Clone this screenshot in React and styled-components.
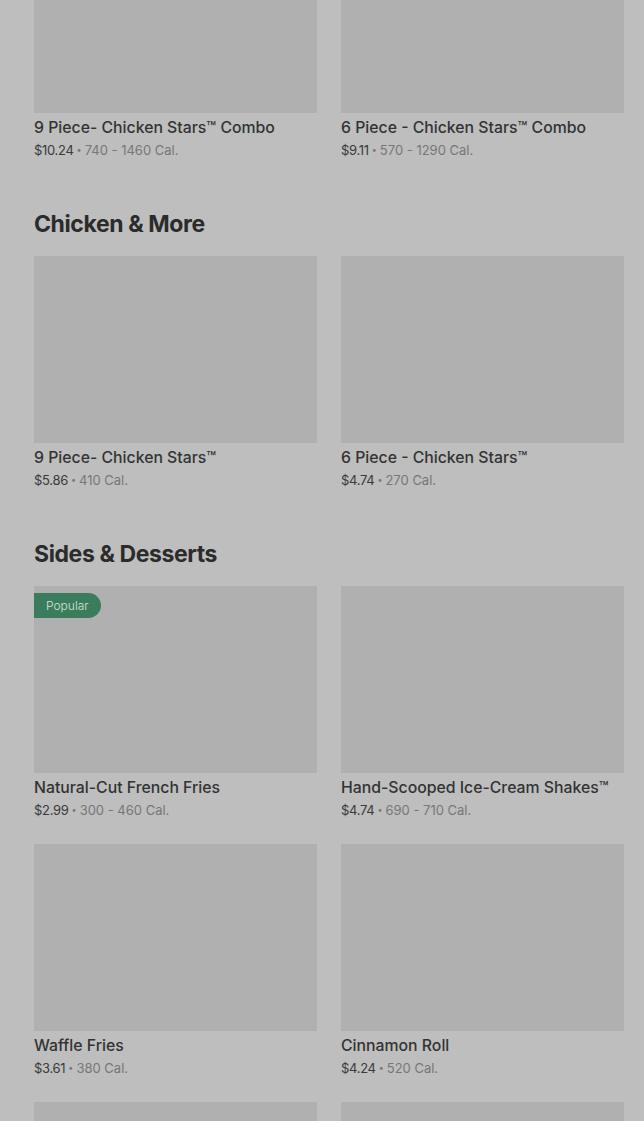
import React from "react";
import styled, { createGlobalStyle } from "styled-components";

const GlobalStyle = createGlobalStyle`
  html, body {
    margin: 0;
    padding: 0;
    background: #bebebe;
    font-family: Inter, "Noto Sans", "Liberation Sans", sans-serif;
    overflow: hidden;
  }
`;

const sections = [
  {
    title: null,
    items: [
      { name: "9 Piece- Chicken Stars™ Combo", price: "$10.24", cal: "740 - 1460 Cal." },
      { name: "6 Piece - Chicken Stars™ Combo", price: "$9.11", cal: "570 - 1290 Cal." },
    ],
  },
  {
    title: "Chicken & More",
    items: [
      { name: "9 Piece- Chicken Stars™", price: "$5.86", cal: "410 Cal." },
      { name: "6 Piece - Chicken Stars™", price: "$4.74", cal: "270 Cal." },
    ],
  },
  {
    title: "Sides & Desserts",
    items: [
      { name: "Natural-Cut French Fries", price: "$2.99", cal: "300 - 460 Cal.", popular: true },
      { name: "Hand-Scooped Ice-Cream Shakes™", price: "$4.74", cal: "690 - 710 Cal." },
      { name: "Waffle Fries", price: "$3.61", cal: "380 Cal." },
      { name: "Cinnamon Roll", price: "$4.24", cal: "520 Cal." },
      { name: "Chocolate Chunk Cookie", price: "$1.99", cal: "370 Cal." },
      { name: "Side Salad", price: "$2.49", cal: "150 Cal." },
    ],
  },
];

const App = () => (
  <>
    <GlobalStyle />
    <Page>
      {sections.map((section, i) => (
        <Section key={i}>
          {section.title && <SectionTitle>{section.title}</SectionTitle>}
          <Grid>
            {section.items.map((item, j) => (
              <Card key={j}>
                <ImageBox>
                  {item.popular && <Badge>Popular</Badge>}
                </ImageBox>
                <ItemName>{item.name}</ItemName>
                <PriceLine>
                  <Price>{item.price}</Price>
                  <Dot>•</Dot>
                  <Cal>{item.cal}</Cal>
                </PriceLine>
              </Card>
            ))}
          </Grid>
        </Section>
      ))}
    </Page>
  </>
);

const Page = styled.main`
  padding: 0 20px 0 34px;
  margin-top: -74px;
`;

const Section = styled.section`
  & + & {
    margin-top: 49px;
  }
`;

const SectionTitle = styled.h2`
  margin: 0 0 16px;
  font-size: 23px;
  line-height: 32px;
  font-weight: 700;
  letter-spacing: -0.4px;
  color: #2b2b2b;
`;

const Grid = styled.div`
  display: grid;
  grid-template-columns: 283px 283px;
  column-gap: 24px;
  row-gap: 25px;
`;

const Card = styled.div`
  display: flex;
  flex-direction: column;
`;

const ImageBox = styled.div`
  position: relative;
  height: 187px;
  background: #b0b0b0;
`;

const Badge = styled.span`
  position: absolute;
  top: 7px;
  left: 0;
  height: 25px;
  padding: 0 12px;
  display: flex;
  align-items: center;
  background: #3b7c5c;
  color: #d3e5da;
  font-size: 12px;
  font-weight: 300;
  border-radius: 0 13px 13px 0;
`;

const ItemName = styled.div`
  margin-top: 5px;
  font-size: 15.8px;
  line-height: 20px;
  font-weight: 500;
  color: #333333;
  white-space: nowrap;
`;

const PriceLine = styled.div`
  margin-top: 3px;
  display: flex;
  align-items: center;
  gap: 3px;
  font-size: 13px;
  line-height: 18px;
`;

const Price = styled.span`
  color: #3a3a3a;
  letter-spacing: -0.3px;
`;

const Dot = styled.span`
  color: #777;
  font-size: 9px;
`;

const Cal = styled.span`
  color: #777777;
`;

export default App;
